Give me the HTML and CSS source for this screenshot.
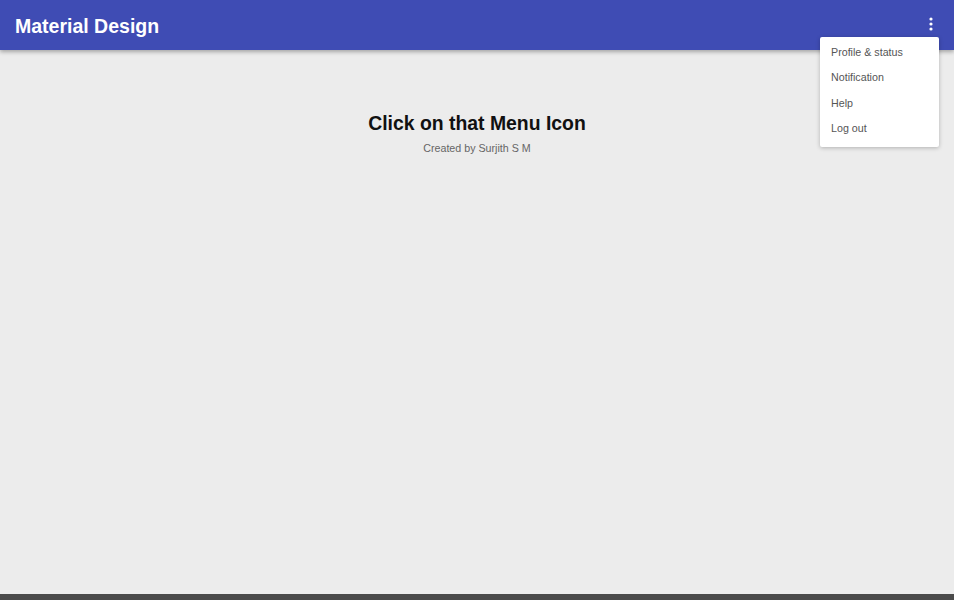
FILE: index.html
```html
<!DOCTYPE html>
<html>
<head>
<meta charset="utf-8">
<link rel="stylesheet" href="styles.css">
</head>
<body>
<div class="page">
  <header class="appbar">
    <div class="brand">Material Design</div>
    <button class="menu-btn" aria-label="menu">
      <svg width="4" height="14" viewBox="0 0 4 14"><circle cx="2" cy="2" r="1.6" fill="#fff"/><circle cx="2" cy="7" r="1.6" fill="#fff"/><circle cx="2" cy="12" r="1.6" fill="#fff"/></svg>
    </button>
    <ul class="dropdown">
      <li>Profile &amp; status</li>
      <li>Notification</li>
      <li>Help</li>
      <li>Log out</li>
    </ul>
  </header>
  <main class="content">
    <h1 class="headline">Click on that Menu Icon</h1>
    <p class="credit">Created by Surjith S M</p>
  </main>
  <footer class="bottom-bar"></footer>
</div>
</body>
</html>
```
FILE: styles.css
```css
html, body {
  margin: 0;
  padding: 0;
  height: 100%;
}
body {
  background: #ececec;
  font-family: "Liberation Sans", Arial, sans-serif;
}
.page {
  display: flex;
  flex-direction: column;
  height: 100vh;
}
.appbar {
  position: relative;
  height: 50px;
  background: #3f4cb4;
  box-shadow: 0 2px 4px rgba(0,0,0,0.3);
  display: flex;
  align-items: center;
  justify-content: space-between;
  padding: 0 15px;
  flex-shrink: 0;
  z-index: 2;
}
.brand {
  color: #fff;
  font-weight: bold;
  font-size: 19.5px;
  margin-top: 2px;
}
.menu-btn {
  background: none;
  border: 0;
  padding: 0;
  margin-right: 6px;
  margin-top: -3px;
  display: flex;
  cursor: pointer;
}
.dropdown {
  position: absolute;
  top: 37px;
  right: 15px;
  width: 119px;
  margin: 0;
  padding: 8px 0 1px;
  list-style: none;
  background: #fff;
  border-radius: 2px;
  box-shadow: 0 1px 4px rgba(0,0,0,0.25);
}
.dropdown li {
  font-size: 10.7px;
  color: #555;
  padding: 0 11px;
  height: 25.3px;
  line-height: 14px;
}
.content {
  flex: 1;
  text-align: center;
  padding-top: 61px;
}
.headline {
  margin: 0;
  font-size: 19.4px;
  font-weight: bold;
  color: #111;
  line-height: 24px;
}
.credit {
  margin: 7px 0 0;
  font-size: 10.7px;
  color: #666;
}
.bottom-bar {
  height: 6px;
  background: #4a4a4a;
  flex-shrink: 0;
}
```
